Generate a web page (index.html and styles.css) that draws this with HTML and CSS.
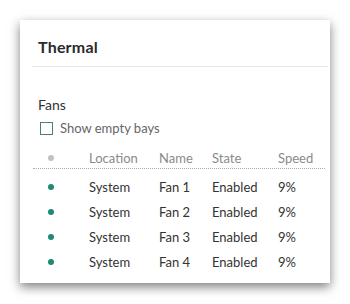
FILE: index.html
```html
<!DOCTYPE html>
<html>
<head>
<meta charset="utf-8">
<link rel="stylesheet" href="styles.css">
</head>
<body>
<div class="card">
  <div class="title">Thermal</div>
  <div class="divider"></div>
  <div class="section">
    <div class="section-title">Fans</div>
    <label class="check"><span class="box"></span><span>Show empty bays</span></label>
  </div>
  <div class="table">
    <div class="row head">
      <div class="cell dotcell"><span class="dot grey"></span></div>
      <div class="cell">Location</div>
      <div class="cell">Name</div>
      <div class="cell">State</div>
      <div class="cell">Speed</div>
    </div>
    <div class="row">
      <div class="cell dotcell"><span class="dot"></span></div>
      <div class="cell">System</div>
      <div class="cell">Fan 1</div>
      <div class="cell">Enabled</div>
      <div class="cell">9%</div>
    </div>
    <div class="row">
      <div class="cell dotcell"><span class="dot"></span></div>
      <div class="cell">System</div>
      <div class="cell">Fan 2</div>
      <div class="cell">Enabled</div>
      <div class="cell">9%</div>
    </div>
    <div class="row">
      <div class="cell dotcell"><span class="dot"></span></div>
      <div class="cell">System</div>
      <div class="cell">Fan 3</div>
      <div class="cell">Enabled</div>
      <div class="cell">9%</div>
    </div>
    <div class="row">
      <div class="cell dotcell"><span class="dot"></span></div>
      <div class="cell">System</div>
      <div class="cell">Fan 4</div>
      <div class="cell">Enabled</div>
      <div class="cell">9%</div>
    </div>
  </div>
</div>
</body>
</html>
```

FILE: styles.css
```css
html, body {
  margin: 0;
  padding: 0;
  background: #ffffff;
}
body {
  width: 350px;
  height: 304px;
  overflow: hidden;
  font-family: Lato, "Liberation Sans", sans-serif;
  color: #333;
}
.card {
  margin: 20px 0 0 20px;
  width: 310px;
  height: 263px;
  background: #fff;
  box-shadow: 0 4px 10px rgba(0,0,0,0.5);
  box-sizing: border-box;
  padding-top: 17px;
}
.title {
  padding-left: 18px;
  font-size: 16px;
  font-weight: 700;
  line-height: 20px;
  color: #2a2a2a;
  letter-spacing: 0.2px;
}
.divider {
  margin: 9px 2px 0 12px;
  height: 1px;
  background: #e6e6e6;
}
.section {
  padding: 29px 0 0 18px;
}
.section-title {
  font-size: 14px;
  line-height: 18px;
  color: #333;
}
.check {
  display: flex;
  align-items: center;
  gap: 7px;
  margin: 6px 0 0 2px;
  font-size: 13px;
  color: #666;
  line-height: 16px;
}
.box {
  width: 11px;
  height: 11px;
  border: 1.5px solid #4f7f74;
}
.table {
  margin: 12px 5px 0 13px;
}
.row {
  display: grid;
  grid-template-columns: 56px 70px 53px 66px 1fr;
  align-items: center;
  height: 25px;
  font-size: 13px;
  color: #333;
}
.row.head {
  color: #8a8a8a;
  height: 20px;
  border-bottom: 1px dotted #aaa;
  margin-bottom: 5px;
}
.dotcell {
  padding-left: 15px;
  display: flex;
  align-items: center;
}
.dot {
  width: 6px;
  height: 6px;
  border-radius: 50%;
  background: #1d8a72;
}
.dot.grey {
  background: #c2c2c2;
}
```
